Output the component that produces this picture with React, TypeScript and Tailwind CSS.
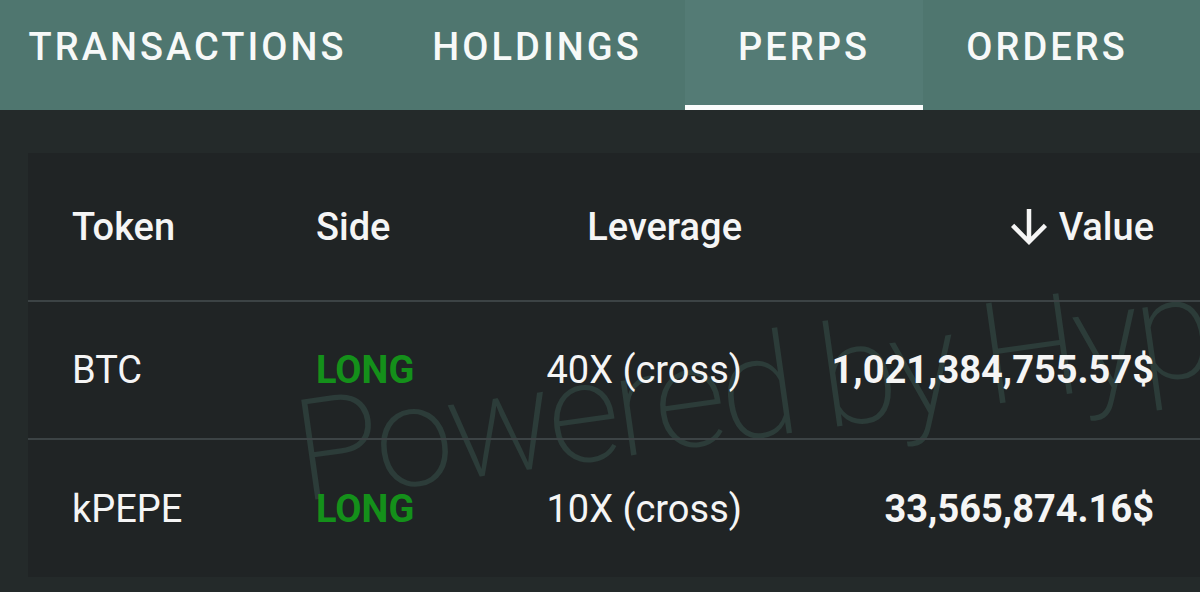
import React from "react";

const tabs = [
  { label: "TRANSACTIONS", w: "w-[389px] pr-[14px]", active: false },
  { label: "HOLDINGS", w: "w-[296px]", active: false },
  { label: "PERPS", w: "w-[238px]", active: true },
  { label: "ORDERS", w: "w-[248px]", active: false },
];

const rows = [
  { token: "BTC", side: "LONG", lev: "40X (cross)", value: "1,021,384,755.57$" },
  { token: "kPEPE", side: "LONG", lev: "10X (cross)", value: "33,565,874.16$" },
];

function ArrowDown() {
  return (
    <svg width="54" height="54" viewBox="0 0 24 24" fill="#f5f5f5" aria-hidden="true">
      <path d="M20 12l-1.41-1.41L13 16.17V4h-2v12.17l-5.58-5.59L4 12l8 8 8-8z" />
    </svg>
  );
}

export default function App() {
  return (
    <div
      className="w-[1200px] h-[592px] overflow-hidden bg-[#242a2a] text-[#f5f5f5] flex flex-col"
      style={{ fontFamily: "Roboto, 'Noto Sans', sans-serif" }}
    >
      {/* Tab bar */}
      <div className="h-[110px] bg-[#4f766f] flex shrink-0">
        {tabs.map((t) => (
          <div
            key={t.label}
            className={`${t.w} h-full flex flex-col ${t.active ? "bg-[#547b75]" : ""}`}
          >
            <div className="flex-1 flex justify-center pt-[25px]">
              <span className="text-[38px] leading-[44px] font-medium tracking-[0.08em] text-[#f7f9f8]">
                {t.label}
              </span>
            </div>
            <div className={`h-[5px] ${t.active ? "bg-[#fbfcfc]" : ""}`} />
          </div>
        ))}
      </div>

      {/* Card */}
      <div className="mt-[43px] ml-[28px] h-[424px] bg-[#202425] relative overflow-hidden flex flex-col">
        <span
          className="absolute left-[274px] top-[228px] origin-[11px_120px] rotate-[-8deg] whitespace-nowrap pointer-events-none text-[142px] leading-[142px] font-extralight tracking-[-0.04em] text-[#2c3c39]"
        >
          Powered by Hyperliquid
        </span>

        {/* header row */}
        <div className="relative h-[147px] shrink-0 grid grid-cols-[244px_184px_242px_1fr] items-center pl-[44px] pr-[46px] text-[38px] leading-[44px] font-medium">
          <div>Token</div>
          <div>Side</div>
          <div className="text-right">Leverage</div>
          <div className="flex items-center justify-end gap-[3px]">
            <ArrowDown />
            <span>Value</span>
          </div>
        </div>

        {rows.map((r, i) => (
          <div key={r.token} className="relative flex flex-col shrink-0">
            <div className="h-[2px] bg-[#3c4345]" />
            <div
              className={`${i === 0 ? "h-[136px]" : "h-[137px]"} grid grid-cols-[244px_184px_242px_1fr] items-center pl-[44px] pr-[46px] text-[38px] leading-[44px]`}
            >
              <div>{r.token}</div>
              <div className="font-bold text-[#14901a]">{r.side}</div>
              <div className="text-right">{r.lev}</div>
              <div className="text-right font-bold">{r.value}</div>
            </div>
          </div>
        ))}
      </div>
    </div>
  );
}
